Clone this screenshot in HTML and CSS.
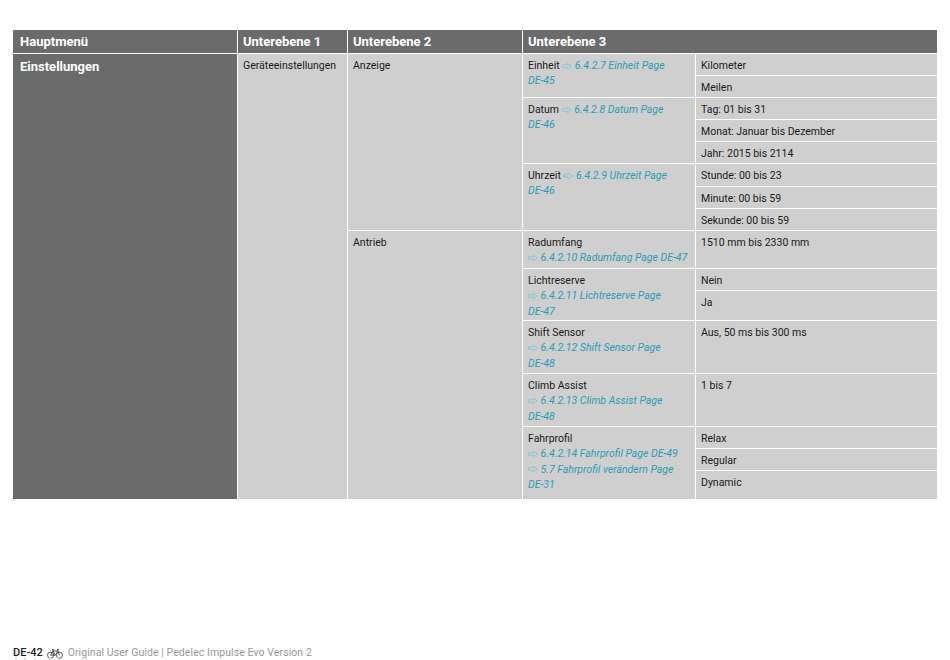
FILE: index.html
```html
<!DOCTYPE html>
<html lang="de">
<head>
<meta charset="utf-8">
<title>Original User Guide</title>
<link rel="stylesheet" href="styles.css">
</head>
<body>
<svg class="defs" width="0" height="0" aria-hidden="true">
  <symbol id="arrow" viewBox="0 0 12 9"><path d="M.6 3h5.6V.9L11 4.5 6.2 8.1V6H.6z" fill="none" stroke="currentColor" stroke-width="1"/></symbol>
</svg>
<table class="menu">
  <colgroup><col class="c1"><col class="c2"><col class="c3"><col class="c4"><col class="c5"></colgroup>
  <thead>
    <tr class="head"><th>Hauptmenü</th><th>Unterebene 1</th><th>Unterebene 2</th><th colspan="2">Unterebene 3</th></tr>
  </thead>
  <tbody>
    <tr>
      <td class="main end" rowspan="16">Einstellungen</td>
      <td class="end" rowspan="16">Geräteeinstellungen</td>
      <td rowspan="8">Anzeige</td>
      <td rowspan="2">Einheit <a><svg class="ar"><use href="#arrow"/></svg> 6.4.2.7 Einheit Page<br>DE-45</a></td>
      <td>Kilometer</td>
    </tr>
    <tr><td>Meilen</td></tr>
    <tr>
      <td rowspan="3">Datum <a><svg class="ar"><use href="#arrow"/></svg> 6.4.2.8 Datum Page<br>DE-46</a></td>
      <td>Tag: 01 bis 31</td>
    </tr>
    <tr><td>Monat: Januar bis Dezember</td></tr>
    <tr><td>Jahr: 2015 bis 2114</td></tr>
    <tr class="r23">
      <td rowspan="3">Uhrzeit <a><svg class="ar"><use href="#arrow"/></svg> 6.4.2.9 Uhrzeit Page<br>DE-46</a></td>
      <td>Stunde: 00 bis 23</td>
    </tr>
    <tr><td>Minute: 00 bis 59</td></tr>
    <tr><td>Sekunde: 00 bis 59</td></tr>
    <tr class="r38">
      <td class="end" rowspan="8">Antrieb</td>
      <td>Radumfang<br><a><svg class="ar"><use href="#arrow"/></svg> 6.4.2.10 Radumfang Page DE-47</a></td>
      <td>1510 mm bis 2330 mm</td>
    </tr>
    <tr>
      <td rowspan="2">Lichtreserve<br><a><svg class="ar"><use href="#arrow"/></svg> 6.4.2.11 Lichtreserve Page<br>DE-47</a></td>
      <td>Nein</td>
    </tr>
    <tr class="r30"><td>Ja</td></tr>
    <tr class="r53">
      <td>Shift Sensor<br><a><svg class="ar"><use href="#arrow"/></svg> 6.4.2.12 Shift Sensor Page<br>DE-48</a></td>
      <td>Aus, 50 ms bis 300 ms</td>
    </tr>
    <tr class="r53">
      <td>Climb Assist<br><a><svg class="ar"><use href="#arrow"/></svg> 6.4.2.13 Climb Assist Page<br>DE-48</a></td>
      <td>1 bis 7</td>
    </tr>
    <tr>
      <td class="end" rowspan="3">Fahrprofil<br><a><svg class="ar"><use href="#arrow"/></svg> 6.4.2.14 Fahrprofil Page DE-49</a><br><a><svg class="ar"><use href="#arrow"/></svg> 5.7 Fahrprofil verändern Page<br>DE-31</a></td>
      <td>Relax</td>
    </tr>
    <tr><td>Regular</td></tr>
    <tr class="r28"><td class="end">Dynamic</td></tr>
  </tbody>
</table>
<footer class="foot">
  <span class="page">DE-42</span>
  <svg class="bike" viewBox="0 0 16 11" aria-hidden="true"><g fill="none" stroke="#444" stroke-width=".9"><circle cx="3.6" cy="7.2" r="3.1"/><circle cx="12.4" cy="7.2" r="3.1"/><path d="M3.6 7.2 6 3h5l1.4 4.2M6 3l2.2 4.2H3.6M8.2 7.2 11 3M5.2 1.6h2M6 1.6 6 3M10.6 1.4 11 3M10.2 1.4h2"/></g></svg>
  <span class="guide">Original User Guide | Pedelec Impulse Evo Version 2</span>
</footer>
<svg class="ticks" viewBox="0 0 100 3" aria-hidden="true"><path d="M16 0v3M25 0v3M35 0v3M50 0v3M58 0v3M83 0v3M86 0v3" stroke="#ddd" stroke-width="1.5"/></svg>
</body>
</html>
```
FILE: styles.css
```css
html, body { margin: 0; padding: 0; height: 660px; overflow: hidden; background: #fff; }
body { font-family: Roboto, "Open Sans", sans-serif; color: #1a1a1a; padding: 30px 13px 0; box-sizing: border-box; position: relative; }
.defs { position: absolute; }
.menu { border-collapse: separate; border-spacing: 0; table-layout: fixed; width: 924px; font-size: 10.5px; line-height: 15.3px; }
.c1 { width: 224px; } .c2 { width: 110px; } .c3 { width: 175px; } .c4 { width: 173px; } .c5 { width: 242px; }
.menu td, .menu th { border-left: 1px solid #fff; border-bottom: 1px solid #fff; padding: 4px 5px 1px; vertical-align: top; text-align: left; background: #cfcfcf; box-sizing: border-box; }
.menu tr { height: 22px; }
.menu .head { height: 24px; }
.menu th { background: #6b6b6b; color: #fff; font-size: 13px; font-weight: 700; }
.menu th:first-child { border-left: 0; padding-left: 7px; }
.menu .main { background: #6b6b6b; color: #fff; font-size: 13px; font-weight: 700; padding: 5px 7px; border-left: 0; }
.menu .r23 { height: 23px; }
.menu .r38 { height: 38px; }
.menu .r30 { height: 30px; }
.menu .r53 { height: 53px; }
.menu .r28 { height: 28px; }
.menu .end { border-bottom: 0; }
.menu a { color: #2a9db5; font-style: italic; }
.ar { width: 10px; height: 8px; color: #7fc4d3; vertical-align: -0.5px; }
.foot { position: absolute; left: 13px; top: 645px; display: flex; align-items: center; font-size: 11px; line-height: 16px; }
.page { color: #222; font-weight: 500; }
.bike { width: 16px; height: 11px; margin: 0 5px 0 4px; }
.guide { color: #999; font-size: 10.5px; letter-spacing: .08px; }
.ticks { position: absolute; left: 0; bottom: 0; width: 100px; height: 3px; }
```
